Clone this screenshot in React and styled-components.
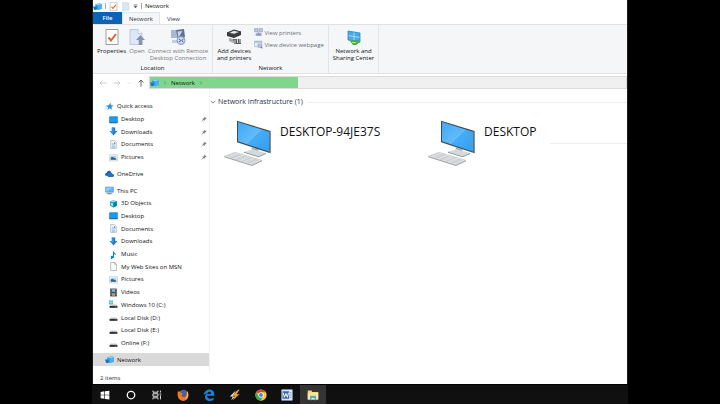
import styled, { createGlobalStyle } from "styled-components";

const GlobalStyle = createGlobalStyle`
  * {
    box-sizing: border-box;
  }

  body {
    margin: 0;
    background: #000;
    font-family: "Open Sans", "Noto Sans", sans-serif;
    font-size: 6px;
    line-height: 8px;
    color: #111;
  }

  button {
    margin: 0;
    padding: 0;
    border: 0;
    background: none;
    font: inherit;
    color: inherit;
  }

  svg {
    display: block;
    flex: none;
  }
`;

const Page = styled.div`
  display: flex;
  flex-direction: column;
  min-height: 100vh;
  padding: 0 92px;
`;

const Window = styled.div`
  flex: 1;
  display: flex;
  flex-direction: column;
  background: #fff;
  border: solid #1c1c1c;
  border-width: 0 1px;
`;

/* title bar and tabs */

const TitleBar = styled.header`
  display: flex;
  align-items: center;
  height: 12px;
  gap: 3px;
`;

const Split = styled.span`
  width: 1px;
  height: 6px;
  background: #a8a8a8;
`;

const Title = styled.h1`
  margin: 0;
  font-size: 6px;
  font-weight: 400;
`;

const Tabs = styled.nav`
  display: flex;
  height: 12px;
`;

const Tab = styled.button`
  padding: 0 6px;
  color: #333;
  background: ${(props) => (props.$active ? "#f4f6f8" : "transparent")};
  border: solid ${(props) => (props.$active ? "#e2e4e6" : "transparent")};
  border-width: 1px 1px 0;
`;

const FileTab = styled.button`
  width: 29px;
  color: #fff;
  font-weight: 600;
  background: #0a63b6;
`;

/* ribbon */

const Ribbon = styled.section`
  display: flex;
  height: 50px;
  background: #f4f6f8;
  border: solid #dfe1e3;
  border-width: 1px 0;
`;

const RibbonGroup = styled.div`
  display: flex;
  flex-direction: column;
  justify-content: space-between;
  padding: 3px 4px 1px;
  border-right: 1px solid #e3e5e8;
`;

const GroupBody = styled.div`
  display: flex;
  align-items: flex-start;
  gap: 3px;
`;

const GroupName = styled.span`
  text-align: center;
`;

const BigButton = styled.button`
  display: flex;
  flex-direction: column;
  align-items: center;
  gap: 3px;
  padding-top: 1px;
  line-height: 7px;
  white-space: pre-line;
  color: ${(props) => (props.disabled ? "#777a7e" : "#111")};
`;

const SmallButtons = styled.div`
  display: flex;
  flex-direction: column;
  gap: 3px;
`;

const SmallButton = styled.button`
  display: flex;
  align-items: center;
  gap: 1px;
  color: #6a6e73;
`;

/* address row */

const AddressRow = styled.div`
  display: flex;
  align-items: stretch;
  height: 13px;
  margin-top: 2px;
`;

const NavButtons = styled.div`
  display: flex;
  align-items: center;
  justify-content: space-between;
  width: 56px;
  padding: 0 4px 0 6px;
`;

const Address = styled.div`
  flex: 1;
  background: #f0f0f0;
  border: 1px solid #dadada;
`;

const Progress = styled.div`
  display: flex;
  align-items: center;
  gap: 4px;
  width: 31%;
  height: 100%;
  background: #80d68c;
  white-space: nowrap;
`;

/* body */

const Body = styled.div`
  flex: 1;
  display: flex;
`;

const Sidebar = styled.nav`
  display: flex;
  flex-direction: column;
  width: 117px;
  padding: 7px 0 6px;
  border-right: 1px solid #f2f2f2;
`;

const TreeItem = styled.a`
  flex: 1;
  display: flex;
  align-items: center;
  gap: 3px;
  min-height: 12px;
  max-height: 14px;
  margin-top: ${(props) => (props.$root ? "4px" : "0")};
  padding: 0 2px 0 ${(props) => (props.$root ? "12px" : "16px")};
  background: ${(props) => (props.$selected ? "#d9d9d9" : "transparent")};
  color: inherit;
  text-decoration: none;
`;

const TreeLabel = styled.span`
  flex: 1;
`;

const Content = styled.main`
  flex: 1;
  min-width: 0;
`;

const SectionHeader = styled.h2`
  display: flex;
  align-items: center;
  gap: 2px;
  margin: 9px 0 0;
  font-size: 7px;
  font-weight: 400;
  color: #1f3050;

  &::after {
    content: "";
    flex: 1;
    height: 1px;
    margin-left: 2px;
    background: #eee;
  }
`;

const Devices = styled.div`
  display: grid;
  grid-template-columns: 204px auto 1fr;
  gap: 14px 0;
  padding: 14px 0 0 14px;
`;

const Device = styled.button`
  display: flex;
  align-items: flex-start;
  gap: 9px;
  font-size: 12px;
  line-height: 24px;
  color: #111;
`;

const Rule = styled.hr`
  align-self: center;
  width: 100%;
  height: 1px;
  margin: 0;
  border: 0;
  border-left: 14px solid #fff;
  background: #eee;
`;

const StatusBar = styled.footer`
  display: flex;
  align-items: center;
  height: 12px;
  padding: 0 7px;
  color: #333;
`;

const Taskbar = styled.nav`
  display: flex;
  height: 20px;
  background: #101010;
  border-top: 1px solid #000;
`;

const TaskButton = styled.button`
  display: flex;
  align-items: center;
  justify-content: center;
  width: 26px;
  background: ${(props) => (props.$open ? "#343434" : "transparent")};
`;

/* icons, drawn on a 16 unit grid */

const Svg = ({ size = 9, children, ...rest }) => (
  <svg width={size} height={size} viewBox="0 0 16 16" fill="none" aria-hidden="true" {...rest}>
    {children}
  </svg>
);

const NetworkIcon = (props) => (
  <Svg {...props}>
    <path d="M4 4 12 2l4 2v8l-7 2-5-2z" fill="#2f9be2" />
    <path d="m4 4 8-2 4 2-7 2z" fill="#8fd0f5" />
    <path d="M0 8h6l1 3-1 3H2z" fill="#1877c2" />
    <path d="M9 6v8l7-2V4z" fill="#4bb0ee" />
  </Svg>
);

const CheckPageIcon = (props) => (
  <Svg {...props}>
    <path d="M2 .5h12v15H2z" fill="#fff" stroke="#9b9da3" />
    <path d="m4.500 8.500 2.500 3L12 5" stroke="#e0602a" strokeWidth="2" />
  </Svg>
);

const OpenIcon = (props) => (
  <Svg {...props}>
    <path d="M1 .5h8l4 4v11H1z" fill="#dde7f6" stroke="#bccbe2" />
    <path d="M9 .5v4h4" stroke="#bccbe2" fill="#f4f8fd" />
    <path d="m11.500 6 4.500 5h-2.700v5H9.700v-5H7z" fill="#8794b0" />
  </Svg>
);

const FolderPageIcon = (props) => (
  <Svg {...props}>
    <path d="M3 1h11v14H3z" fill="#dce6f1" stroke="#c4d2e2" />
  </Svg>
);

const RemoteIcon = (props) => (
  <Svg {...props}>
    <path d="M1 1h9v8H1z" fill="#a9b8d2" />
    <path d="m6 1 8-1 1 8-7 2z" fill="#62708f" />
    <path d="m7.500 2.500 5-.5-4 6.500z" fill="#c9d5ea" />
    <path d="M2 11h6v3H2z" fill="#c4cede" />
    <circle cx="11" cy="11.500" r="4" fill="#c8d6ee" stroke="#8798ba" />
    <path d="m9 10 2 1.500L9 13m4.500-3-2 1.500 2 1.500" stroke="#5d6c8c" />
  </Svg>
);

const PrinterIcon = (props) => (
  <Svg {...props}>
    <path d="m1 4 7-3 7 2-7 3z" fill="#777" stroke="#333" />
    <path d="m4 3.500 4-1.500 4 1-4 1.500z" fill="#eee" />
    <path d="m1 4 7 2 7-3v3L8 9 1 7z" fill="#3a3a3a" />
    <path d="m3 9 4 1v4l-4-2z" fill="#a9a9a9" />
    <path d="M7 10h8v5H8z" fill="#555" />
    <path d="M9 10.500v4M11.500 10v4M14 10v4" stroke="#e6e6e6" />
  </Svg>
);

const ViewPrinterIcon = (props) => (
  <Svg {...props}>
    <path d="M1 1h6v6H1zM9 1h6v6H9z" fill="#b9c7df" stroke="#8899bb" />
    <path d="M4 9h9v5H4z" fill="#9cabc8" />
    <path d="M8 7v3M2 12h12" stroke="#7283a8" />
  </Svg>
);

const WebpageIcon = (props) => (
  <Svg {...props}>
    <path d="M1 2h13v10H1z" fill="#e6edf7" stroke="#9aa9c4" />
    <path d="M1 3.500h13" stroke="#9aa9c4" strokeWidth="2" />
    <circle cx="10" cy="10" r="3.500" fill="#b5c5e0" stroke="#8798ba" />
    <path d="m12 12 3 3" stroke="#7283a8" strokeWidth="2" />
  </Svg>
);

const SharingIcon = (props) => (
  <Svg {...props}>
    <path d="m2 2 12 2v9L2 11z" fill="#45a9ea" />
    <path d="m8 3v9M2 6.500l12 2" stroke="#bfe3fa" strokeWidth=".8" />
    <path d="m2 2 12 2v9L2 11z" stroke="#2787cb" strokeWidth=".8" />
    <path d="M4 12c2-2 4 0 8-1l2 2-4 3H7z" fill="#45ad4c" />
    <path d="M6 13.500h4" stroke="#b6e79c" />
  </Svg>
);

const StarIcon = (props) => (
  <Svg {...props}>
    <path
      d="m9.500 1 1.300 4.700 4.700.4-4 2.700 1.200 5-4-2.600L4 14.500l1.700-4.800L2 6.300l5-.5z"
      fill="#2f8fdb"
    />
    <path d="M0 9h4M0 12h3" stroke="#7fbdeb" />
  </Svg>
);

const DesktopIcon = (props) => (
  <Svg {...props}>
    <path d="M1 3h14v11H1z" fill="#1c9cf0" stroke="#0b68b5" />
    <path d="M1 13.500h14" stroke="#0b5596" />
  </Svg>
);

const DownloadIcon = (props) => (
  <Svg {...props}>
    <path d="M5 1h6v6h4l-7 8-7-8h4z" fill="#2478cc" />
    <path d="M5 1h3v12L1 7h4z" fill="#3e92e0" />
  </Svg>
);

const DocumentIcon = (props) => (
  <Svg {...props}>
    <path d="M3 1h7l3 3v11H3z" fill="#f5f9fc" stroke="#8ea0b0" />
    <path d="M5 6h3M5 8.500h6M5 11h6M5 13h6" stroke="#5b9bc9" />
    <path d="M9 4h2v3H9z" fill="#4a8dc0" />
  </Svg>
);

const PictureIcon = (props) => (
  <Svg {...props}>
    <path d="M1 3h14v11H1z" fill="#fff" stroke="#a9b6c1" />
    <path d="M3 5h10v7H3z" fill="#9fd3f3" />
    <path d="m3 8 3-1 7 3v2H3z" fill="#2b6488" />
  </Svg>
);

const OneDriveIcon = (props) => (
  <Svg {...props}>
    <path d="M1 12c-2-3 0-5 2-5 1-5 7-5 8-1l-4 2-2 4z" fill="#0f5fae" />
    <path d="M6 14c-3-1-2-5 1-5 1-4 6-3 6 0 4 0 4 5 1 5z" fill="#1676cb" />
  </Svg>
);

const PcIcon = (props) => (
  <Svg {...props}>
    <path d="M1 2h14v9H1z" fill="#56b8f3" stroke="#5c89a8" />
    <path d="m2 10 11-7H2z" fill="#8ed2fa" />
    <path d="M6 12h4v1h3v1.500H3V13h3z" fill="#7b909f" />
  </Svg>
);

const CubeIcon = (props) => (
  <Svg {...props}>
    <path d="m2 4 6-2 6 2v8l-6 3-6-3z" fill="#1fa3cf" />
    <path d="m2 4 6-2 6 2-6 2z" fill="#8be2f5" />
    <path d="M8 6v9l6-3V4z" fill="#0d7fae" />
    <path d="m4 7 3 1v4l-3-1z" fill="#d1f4fb" />
  </Svg>
);

const MusicIcon = (props) => (
  <Svg {...props}>
    <path d="M7 1c1 4 6 4 5 9-1-3-3-3-3-3v5c0 4-6 4-6 1s3-3 4-2z" fill="#1583d1" />
  </Svg>
);

const PageIcon = (props) => (
  <Svg {...props}>
    <path d="M3 1h7l3 3v11H3z" fill="#fff" stroke="#888" />
    <path d="M10 1v3h3" stroke="#888" />
  </Svg>
);

const VideoIcon = (props) => (
  <Svg {...props}>
    <path d="M2 1h12v14H2z" fill="#3b4754" />
    <path d="M5 2h6v5H5z" fill="#7db2d5" />
    <path d="M5 9h6v5H5z" fill="#b09a6a" />
    <path d="M3.500 2v12M12.500 2v12" stroke="#ccd3d9" strokeDasharray="1.500 1.500" />
  </Svg>
);

const DriveIcon = ({ system, ...props }) => (
  <Svg {...props}>
    {system && <path d="M0 1h3v3H0zM4 1h3v3H4zM0 5h3v3H0zM4 5h3v3H4z" fill="#20b4d8" />}
    <path d="m3 8 10 0 2 3H1z" fill="#c7c9cb" />
    <path d="M1 10.500h14V14H1z" fill="#303234" />
    <path d="M11 12.500h2" stroke="#7ed08a" />
  </Svg>
);

const PinIcon = (props) => (
  <Svg {...props}>
    <path d="m9 1 6 6-2 1-1 0-3 3v3L3 7h3l3-3z" fill="#777c82" />
    <path d="m6 10-5 5" stroke="#777c82" strokeWidth="1.500" />
  </Svg>
);

const Arrow = ({ turn = 0, color = "#c8c8c8", ...props }) => (
  <Svg {...props}>
    <path
      d="M15 8H2m5-5L2 8l5 5"
      stroke={color}
      strokeWidth="1.800"
      transform={`rotate(${turn} 8 8)`}
    />
  </Svg>
);

const Chevron = ({ turn = 0, color = "#555", ...props }) => (
  <Svg {...props}>
    <path d="m2 5 6 6 6-6" stroke={color} strokeWidth="2" transform={`rotate(${turn} 8 8)`} />
  </Svg>
);

const MoreIcon = (props) => (
  <Svg {...props}>
    <path d="M2 3h12" stroke="#333" strokeWidth="2" />
    <path d="M2 7h12l-6 6z" fill="#333" />
  </Svg>
);

const ComputerIcon = () => (
  <svg width="47" height="46" viewBox="57 92 141 138" fill="none" aria-hidden="true">
    <defs>
      <linearGradient id="screen" x1="0" y1="0" x2="1" y2="1">
        <stop offset="0" stopColor="#3fa9f5" />
        <stop offset="0.500" stopColor="#62bbfa" />
        <stop offset="0.520" stopColor="#46acf6" />
        <stop offset="1" stopColor="#329eee" />
      </linearGradient>
    </defs>
    <path d="m140 174 20 6v12l-20-3z" fill="#a9aeb2" />
    <path d="m117 187 26-7 40 11-22 10z" fill="#d6d9db" />
    <path d="m117 187 44 14 22-10v3l-22 10-44-14z" fill="#8f959a" />
    <path d="m96 94 101 31v67l-101-33z" fill="#3c4b58" />
    <path d="m99 98 94 30v59l-94-31z" fill="url(#screen)" />
    <path d="M194 125v66l3 1v-67z" fill="#8c979f" />
    <path d="m58 201 32-12 81 24-30 14z" fill="#e4e6e8" stroke="#c0c4c8" strokeWidth="2" />
    <path d="m58 201 83 26 30-14v3l-30 14-83-26z" fill="#9da2a6" />
    <path
      d="m66 198 83 25M74 195l82 25M82 192l82 24M77 207l31-13M93 212l31-13M109 217l31-13M125 222l31-13"
      stroke="#b9bdc1"
      strokeWidth="1.500"
    />
  </svg>
);

const WindowsIcon = (props) => (
  <Svg {...props}>
    <path d="m1 3 6-1v5.500H1zM8 1.800 15 1v6.500H8zM1 8.500h6V14l-6-1zM8 8.500h7V15l-7-.8z" fill="#fff" />
  </Svg>
);

const CortanaIcon = (props) => (
  <Svg {...props}>
    <circle cx="8" cy="8" r="6" stroke="#fff" strokeWidth="2" />
  </Svg>
);

const TaskViewIcon = (props) => (
  <Svg {...props}>
    <path d="M1.500 1v2.500h8V1M1.500 15v-2.500h8V15M1.500 6h8v4h-8z" stroke="#eee" strokeWidth="1.500" />
    <path d="M13.500 1v3M13.500 8.500V15M12 6.500h3" stroke="#eee" strokeWidth="1.500" />
  </Svg>
);

const FirefoxIcon = (props) => (
  <Svg {...props}>
    <circle cx="8" cy="8.500" r="7" fill="#e8511d" />
    <path d="M5 2c3-2 7-1 8 1l-2 8-6-2z" fill="#3c62b8" />
    <path d="M1 3c2 0 3 1 4 2l3 1-2 2c0 4 5 4 7 1V4c4 4 2 11-4 11.500C3 16 0 10 1 3z" fill="#f47a20" />
    <path d="M13 2c4 5 2 10-3 12 4-4 4-7 3-12z" fill="#ffcd35" />
  </Svg>
);

const EdgeIcon = (props) => (
  <Svg {...props}>
    <path
      d="M1 8C2-1 15-2 15 7v2H5.500c0 5 5 4.500 8.500 2.700v3C7 18 1 14 3 9c1-2.500 3-3.500 3-3.500S4.500 5.500 1 8zm4.700-1.500h5.200c0-4-4.500-4-5.200 0z"
      fill="#1683dc"
      fillRule="evenodd"
    />
  </Svg>
);

const WinampIcon = (props) => (
  <Svg {...props}>
    <path d="M9 2 1 10h4l-2 5 5-5H5z" fill="#e8e4d8" />
    <path d="m12 1-8 8h4l-3 6 9-8h-4l4-6z" fill="#f3a52b" />
    <path d="m14 5-7 9 3-5z" fill="#c3762a" />
  </Svg>
);

const ChromeIcon = (props) => (
  <Svg {...props}>
    <circle cx="8" cy="8" r="7.500" fill="#fbc926" />
    <path d="M8 8 1.500 4.300A7.500 7.500 0 0 1 14.500 4.300H8z" fill="#e1402f" />
    <path d="M1.500 4.300A7.500 7.500 0 0 0 7.500 15.500L10.500 10 8 8 4.500 9z" fill="#36a552" />
    <circle cx="8" cy="8" r="3.600" fill="#fff" />
    <circle cx="8" cy="8" r="2.700" fill="#4285e8" />
  </Svg>
);

const WordIcon = (props) => (
  <Svg {...props}>
    <path d="M1 1h14v14H1z" fill="#e9f0fb" stroke="#9bb5dd" />
    <path d="M2 3h9v10H2z" fill="#3563ae" />
    <path d="m3 5 1.500 6L6.500 6l2 5L10 5" stroke="#fff" strokeWidth="1.300" />
    <path d="M12 5h2M12 8h2M12 11h2" stroke="#4f78bd" />
  </Svg>
);

const ExplorerIcon = (props) => (
  <Svg {...props}>
    <path d="M1 2h5l1 2h8v10H1z" fill="#f5d673" />
    <path d="M1 5h14v9H1z" fill="#fbe8a0" />
    <path d="M4 9h8v6h-2v-3H6v3H4z" fill="#4db0c7" />
  </Svg>
);

const tree = [
  { label: "Quick access", Icon: StarIcon, root: true },
  { label: "Desktop", Icon: DesktopIcon, pinned: true },
  { label: "Downloads", Icon: DownloadIcon, pinned: true },
  { label: "Documents", Icon: DocumentIcon, pinned: true },
  { label: "Pictures", Icon: PictureIcon, pinned: true },
  { label: "OneDrive", Icon: OneDriveIcon, root: true },
  { label: "This PC", Icon: PcIcon, root: true },
  { label: "3D Objects", Icon: CubeIcon },
  { label: "Desktop", Icon: DesktopIcon },
  { label: "Documents", Icon: DocumentIcon },
  { label: "Downloads", Icon: DownloadIcon },
  { label: "Music", Icon: MusicIcon },
  { label: "My Web Sites on MSN", Icon: PageIcon },
  { label: "Pictures", Icon: PictureIcon },
  { label: "Videos", Icon: VideoIcon },
  { label: "Windows 10 (C:)", Icon: DriveIcon, system: true },
  { label: "Local Disk (D:)", Icon: DriveIcon },
  { label: "Local Disk (E:)", Icon: DriveIcon },
  { label: "Online (F:)", Icon: DriveIcon },
  { label: "Network", Icon: NetworkIcon, root: true, selected: true },
];

const tasks = [
  { name: "Start", Icon: WindowsIcon, size: 10 },
  { name: "Cortana", Icon: CortanaIcon, size: 10 },
  { name: "Task view", Icon: TaskViewIcon, size: 10 },
  { name: "Firefox", Icon: FirefoxIcon, size: 12 },
  { name: "Edge", Icon: EdgeIcon, size: 12 },
  { name: "Winamp", Icon: WinampIcon, size: 12 },
  { name: "Chrome", Icon: ChromeIcon, size: 12 },
  { name: "Word", Icon: WordIcon, size: 12 },
  { name: "File Explorer", Icon: ExplorerIcon, size: 12, open: true },
];

export default function App() {
  return (
    <>
      <GlobalStyle />
      <Page>
        <Window>
          <TitleBar>
            <NetworkIcon />
            <Split />
            <CheckPageIcon />
            <FolderPageIcon />
            <MoreIcon size={5} />
            <Split />
            <Title>Network</Title>
          </TitleBar>
          <Tabs>
            <FileTab>File</FileTab>
            <Tab $active>Network</Tab>
            <Tab>View</Tab>
          </Tabs>

          <Ribbon>
            <RibbonGroup>
              <GroupBody>
                <BigButton>
                  <CheckPageIcon size={16} />
                  Properties
                </BigButton>
                <BigButton disabled>
                  <OpenIcon size={16} />
                  Open
                </BigButton>
                <BigButton disabled>
                  <RemoteIcon size={16} />
                  {"Connect with Remote\nDesktop Connection"}
                </BigButton>
              </GroupBody>
              <GroupName>Location</GroupName>
            </RibbonGroup>
            <RibbonGroup>
              <GroupBody>
                <BigButton>
                  <PrinterIcon size={16} />
                  {"Add devices\nand printers"}
                </BigButton>
                <SmallButtons>
                  <SmallButton disabled>
                    <ViewPrinterIcon />
                    View printers
                  </SmallButton>
                  <SmallButton disabled>
                    <WebpageIcon />
                    View device webpage
                  </SmallButton>
                </SmallButtons>
              </GroupBody>
              <GroupName>Network</GroupName>
            </RibbonGroup>
            <RibbonGroup>
              <BigButton>
                <SharingIcon size={16} />
                {"Network and\nSharing Center"}
              </BigButton>
            </RibbonGroup>
          </Ribbon>

          <AddressRow>
            <NavButtons>
              <Arrow size={8} />
              <Arrow size={8} turn={180} />
              <Chevron size={4} color="#c8c8c8" />
              <Arrow size={8} turn={90} color="#555" />
            </NavButtons>
            <Address>
              <Progress>
                <NetworkIcon />
                <Chevron size={4} turn={-90} />
                Network
                <Chevron size={4} turn={-90} />
              </Progress>
            </Address>
          </AddressRow>

          <Body>
            <Sidebar>
              {tree.map(({ label, Icon, root, pinned, selected, system }, i) => (
                <TreeItem key={i} href="#" $root={root} $selected={selected}>
                  <Icon {...(system && { system })} />
                  <TreeLabel>{label}</TreeLabel>
                  {pinned && <PinIcon size={6} />}
                </TreeItem>
              ))}
            </Sidebar>
            <Content>
              <SectionHeader>
                <Chevron size={6} />
                Network Infrastructure (1)
              </SectionHeader>
              <Devices>
                <Device>
                  <ComputerIcon />
                  DESKTOP-94JE37S
                </Device>
                <Device>
                  <ComputerIcon />
                  DESKTOP
                </Device>
                <Rule />
              </Devices>
            </Content>
          </Body>
          <StatusBar>2 items</StatusBar>
        </Window>
        <Taskbar>
          {tasks.map(({ name, Icon, size, open }) => (
            <TaskButton key={name} aria-label={name} $open={open}>
              <Icon size={size} />
            </TaskButton>
          ))}
        </Taskbar>
      </Page>
    </>
  );
}
